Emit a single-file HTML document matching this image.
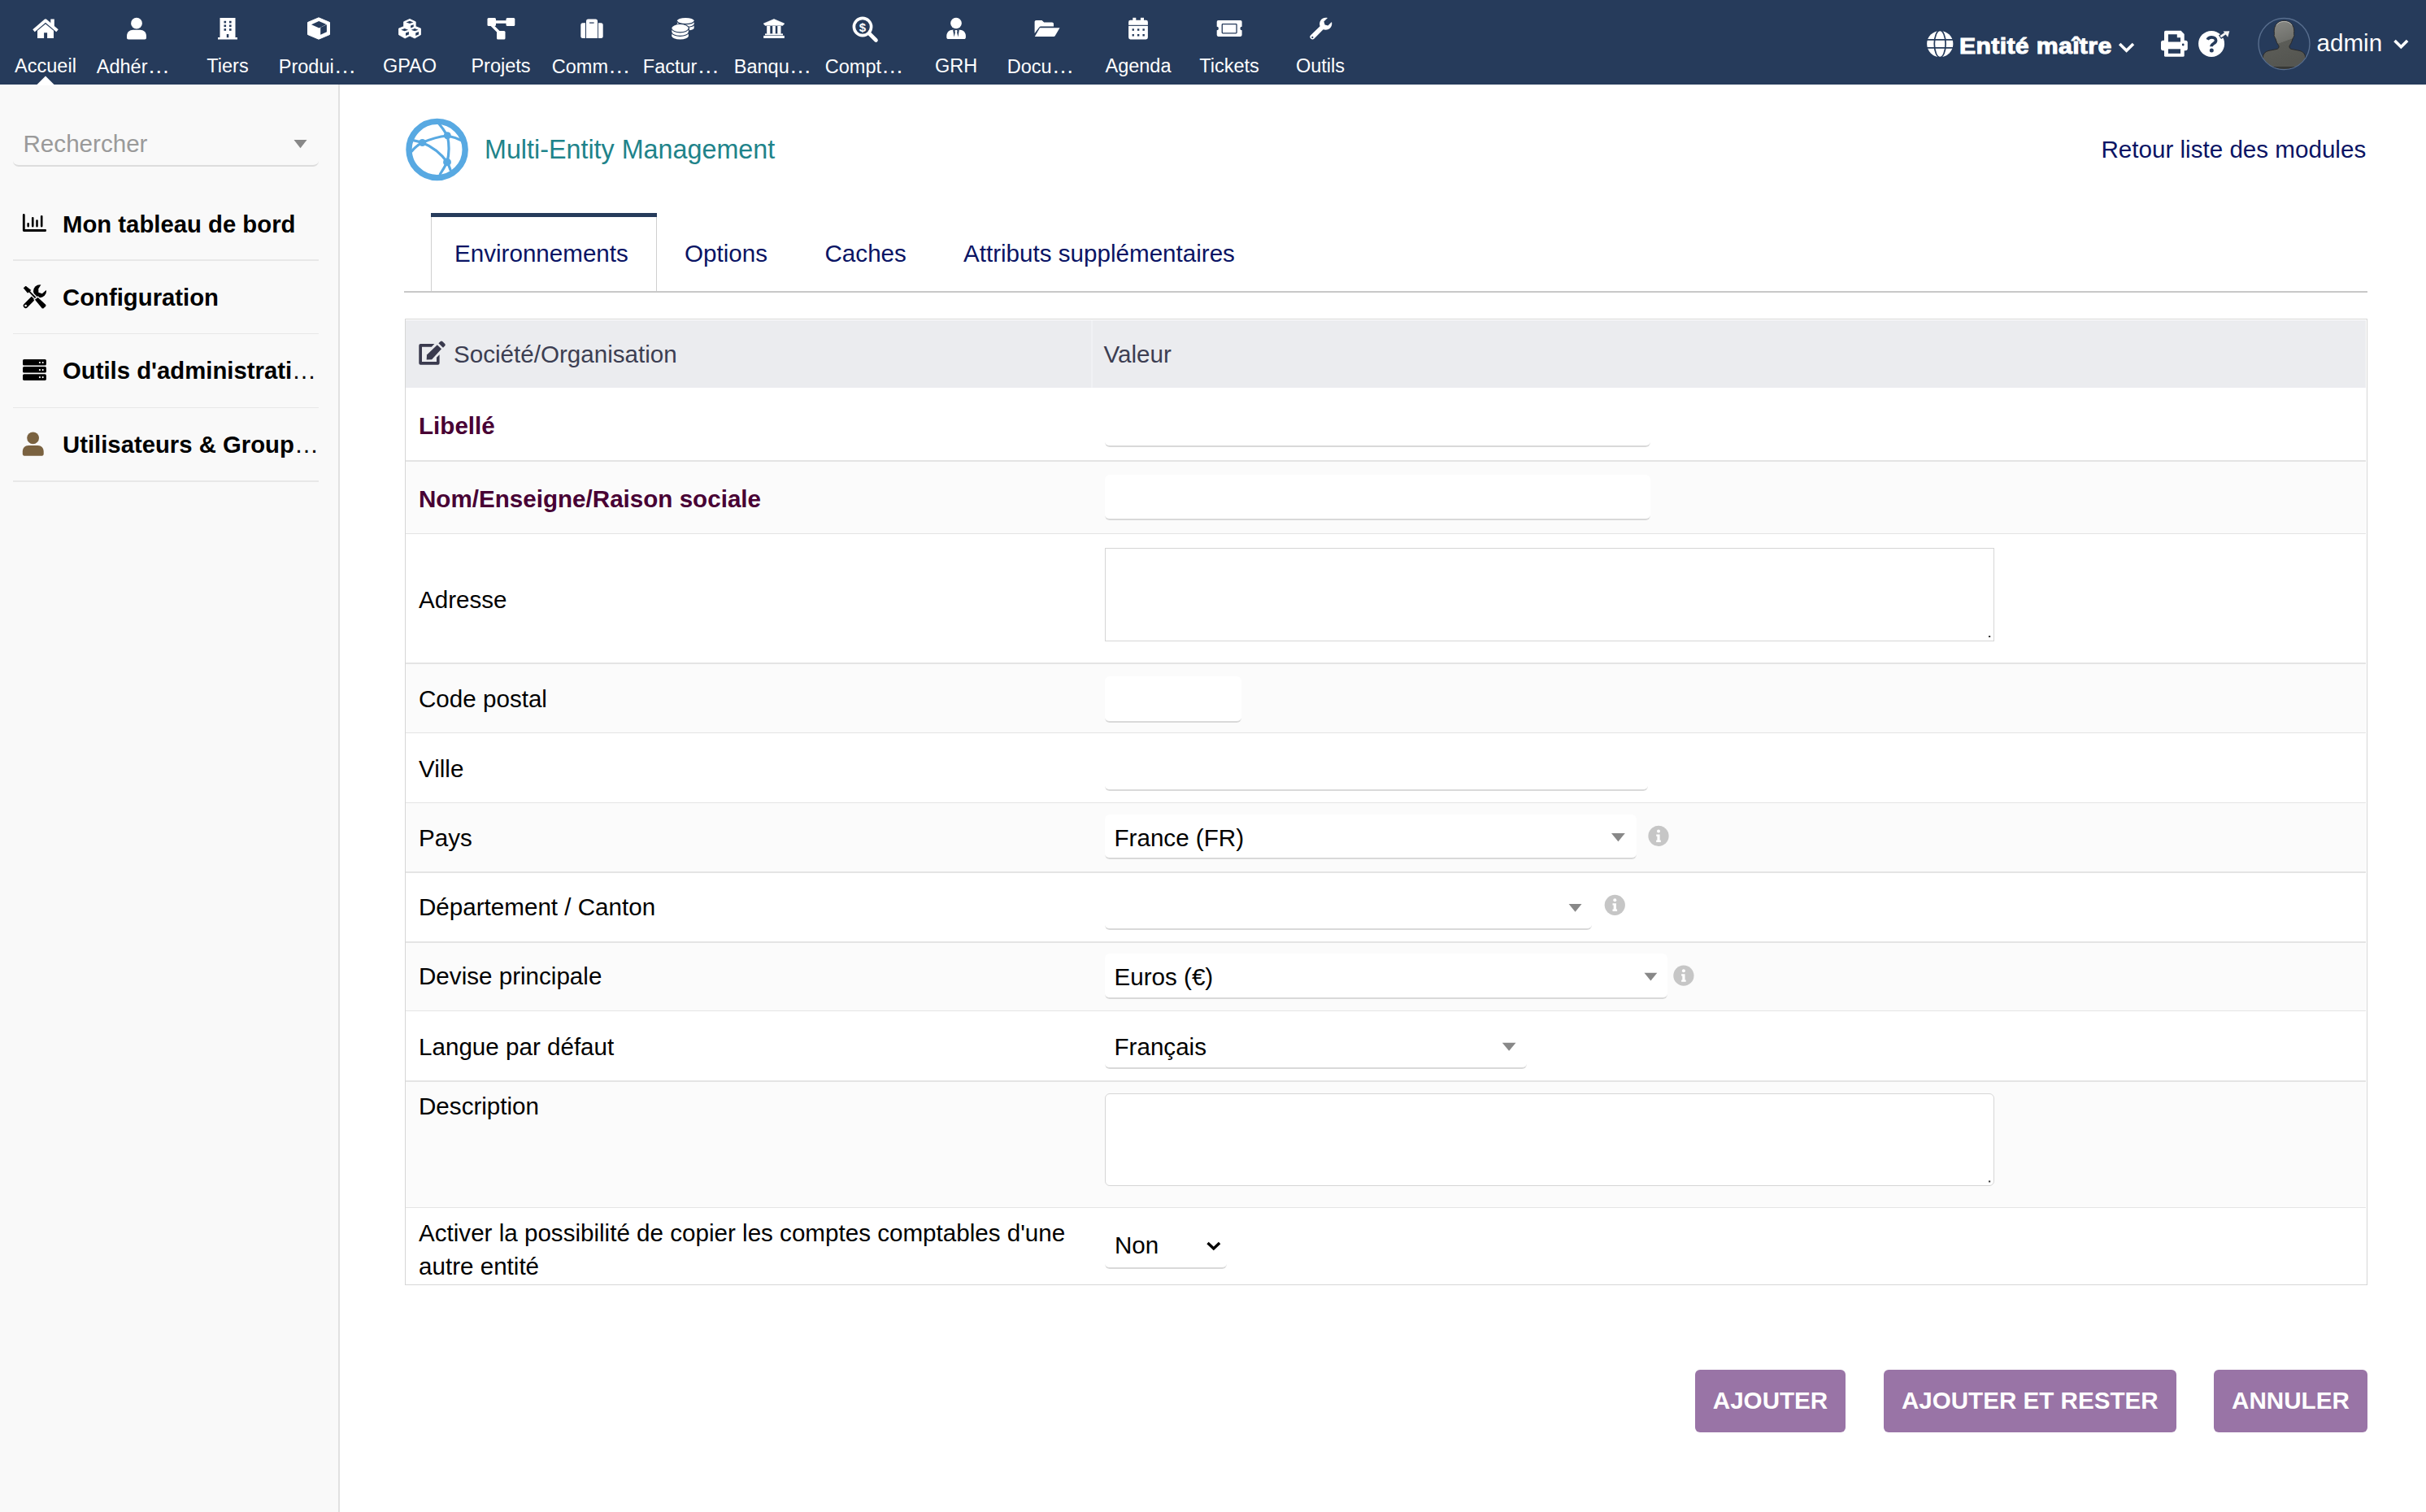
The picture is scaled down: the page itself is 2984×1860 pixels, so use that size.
<!DOCTYPE html>
<html><head><meta charset="utf-8"><title>Multi-Entity Management</title>
<style>
html,body{margin:0;padding:0;width:2984px;height:1860px;overflow:hidden;background:#fff;font-family:'Liberation Sans', sans-serif}
.t{position:absolute;line-height:0;white-space:nowrap;font-family:'Liberation Sans', sans-serif}
svg.ov{position:absolute;left:0;top:0;width:2984px;height:1860px;pointer-events:none}
</style></head><body>
<div style="position:absolute;left:0px;top:0px;width:2984px;height:104px;background:rgb(38,59,91)"></div><div class="t" style="left:0px;width:112px;text-align:center;top:81px;font-size:23.5px;color:#fff">Accueil</div><div class="t" style="left:118.8px;top:81px;font-size:23.5px;color:#fff">Adhér<span style="font-size:27.5px;letter-spacing:0">…</span></div><div class="t" style="left:224px;width:112px;text-align:center;top:81px;font-size:23.5px;color:#fff">Tiers</div><div class="t" style="left:342.8px;top:81px;font-size:23.5px;color:#fff">Produi<span style="font-size:27.5px;letter-spacing:0">…</span></div><div class="t" style="left:448px;width:112px;text-align:center;top:81px;font-size:23.5px;color:#fff">GPAO</div><div class="t" style="left:560px;width:112px;text-align:center;top:81px;font-size:23.5px;color:#fff">Projets</div><div class="t" style="left:678.8px;top:81px;font-size:23.5px;color:#fff">Comm<span style="font-size:27.5px;letter-spacing:0">…</span></div><div class="t" style="left:790.8px;top:81px;font-size:23.5px;color:#fff">Factur<span style="font-size:27.5px;letter-spacing:0">…</span></div><div class="t" style="left:902.8px;top:81px;font-size:23.5px;color:#fff">Banqu<span style="font-size:27.5px;letter-spacing:0">…</span></div><div class="t" style="left:1014.8px;top:81px;font-size:23.5px;color:#fff">Compt<span style="font-size:27.5px;letter-spacing:0">…</span></div><div class="t" style="left:1120px;width:112px;text-align:center;top:81px;font-size:23.5px;color:#fff">GRH</div><div class="t" style="left:1238.8px;top:81px;font-size:23.5px;color:#fff">Docu<span style="font-size:27.5px;letter-spacing:0">…</span></div><div class="t" style="left:1344px;width:112px;text-align:center;top:81px;font-size:23.5px;color:#fff">Agenda</div><div class="t" style="left:1456px;width:112px;text-align:center;top:81px;font-size:23.5px;color:#fff">Tickets</div><div class="t" style="left:1568px;width:112px;text-align:center;top:81px;font-size:23.5px;color:#fff">Outils</div><div class="t" style="left:2849.5px;top:52.50px;font-size:29.6px;color:#fff;font-weight:normal;">admin</div><div class="t" style="left:2410px;top:57px;font-size:27px;color:#fff;font-weight:bold;letter-spacing:0.3px;-webkit-text-stroke:1px #fff;transform:scaleX(1.12);transform-origin:0 0">Entité maître</div><div style="position:absolute;left:0px;top:104px;width:418px;height:1756px;background:#f9f9f9;border-right:2px solid #e1e1e1;box-sizing:border-box"></div><div style="position:absolute;left:0px;top:104px;width:416px;height:1px;background:#fff"></div><div style="position:absolute;left:16px;top:120px;width:376px;height:82.5px;border-bottom:2px solid #ddd;border-radius:0 0 7px 7px"></div><div class="t" style="left:28.5px;top:177.20px;font-size:29.6px;color:#9a9a9a;font-weight:normal;">Rechercher</div><div class="t" style="left:77px;top:275.80px;font-size:29.3px;color:#000;font-weight:bold;">Mon tableau de bord</div><div class="t" style="left:77px;top:366.10px;font-size:29.3px;color:#000;font-weight:bold;">Configuration</div><div class="t" style="left:77px;top:455.80px;font-size:29.3px;color:#000;font-weight:bold;">Outils d'administrati<span style='font-size:30px;font-weight:normal'>…</span></div><div class="t" style="left:77px;top:546.50px;font-size:29.3px;color:#000;font-weight:bold;">Utilisateurs &amp; Group<span style='font-size:30px;font-weight:normal'>…</span></div><div style="position:absolute;left:16px;top:319.25px;width:376px;height:1.5px;background:#e8e8e8"></div><div style="position:absolute;left:16px;top:409.75px;width:376px;height:1.5px;background:#e8e8e8"></div><div style="position:absolute;left:16px;top:500.75px;width:376px;height:1.5px;background:#e8e8e8"></div><div style="position:absolute;left:16px;top:591.25px;width:376px;height:1.5px;background:#e8e8e8"></div><div class="t" style="left:596px;top:184.00px;font-size:32.3px;color:rgb(32,131,138);font-weight:normal;">Multi-Entity Management</div><div class="t" style="left:2584.5px;top:184.30px;font-size:29.6px;color:rgb(10,20,100);font-weight:normal;">Retour liste des modules</div><div style="position:absolute;left:530px;top:262px;width:278px;height:98px;background:#fff;border-left:1.5px solid #d0d0d0;border-right:1.5px solid #d0d0d0;box-sizing:border-box"></div><div style="position:absolute;left:530px;top:262px;width:278px;height:5px;background:rgb(38,59,91)"></div><div style="position:absolute;left:497px;top:358.2px;width:2415px;height:1.8000000000000114px;background:#c8c8c8"></div><div class="t" style="left:559px;top:311.70px;font-size:29.6px;color:rgb(10,20,100);font-weight:normal;">Environnements</div><div class="t" style="left:842px;top:311.70px;font-size:29.6px;color:rgb(10,20,100);font-weight:normal;">Options</div><div class="t" style="left:1014.5px;top:311.70px;font-size:29.6px;color:rgb(10,20,100);font-weight:normal;">Caches</div><div class="t" style="left:1185px;top:311.70px;font-size:29.6px;color:rgb(10,20,100);font-weight:normal;">Attributs supplémentaires</div><div style="position:absolute;left:497.6px;top:392px;width:2414.4px;height:1189px;border:1.6px solid #d6d6d6;box-sizing:border-box;background:#fff"></div><div style="position:absolute;left:499.2px;top:393.6px;width:2411.2000000000003px;height:83.39999999999998px;background:rgb(235,236,239)"></div><div style="position:absolute;left:1342px;top:393.6px;width:1.5px;height:83.39999999999998px;background:rgb(240,241,244)"></div><div style="position:absolute;left:499.2px;top:477px;width:2411.2000000000003px;height:89.35000000000002px;background:#fff"></div><div style="position:absolute;left:499.2px;top:566.35px;width:2411.2000000000003px;height:1.2999999999999545px;background:#e4e4e4"></div><div style="position:absolute;left:499.2px;top:567.65px;width:2411.2000000000003px;height:88.20000000000005px;background:rgb(251,251,251)"></div><div style="position:absolute;left:499.2px;top:655.85px;width:2411.2000000000003px;height:1.2999999999999545px;background:#e4e4e4"></div><div style="position:absolute;left:499.2px;top:657.15px;width:2411.2000000000003px;height:158.20000000000005px;background:#fff"></div><div style="position:absolute;left:499.2px;top:815.35px;width:2411.2000000000003px;height:1.2999999999999545px;background:#e4e4e4"></div><div style="position:absolute;left:499.2px;top:816.65px;width:2411.2000000000003px;height:84.20000000000005px;background:rgb(251,251,251)"></div><div style="position:absolute;left:499.2px;top:900.85px;width:2411.2000000000003px;height:1.2999999999999545px;background:#e4e4e4"></div><div style="position:absolute;left:499.2px;top:902.15px;width:2411.2000000000003px;height:84.70000000000005px;background:#fff"></div><div style="position:absolute;left:499.2px;top:986.85px;width:2411.2000000000003px;height:1.2999999999999545px;background:#e4e4e4"></div><div style="position:absolute;left:499.2px;top:988.15px;width:2411.2000000000003px;height:84.19999999999993px;background:rgb(251,251,251)"></div><div style="position:absolute;left:499.2px;top:1072.35px;width:2411.2000000000003px;height:1.300000000000182px;background:#e4e4e4"></div><div style="position:absolute;left:499.2px;top:1073.65px;width:2411.2000000000003px;height:84.69999999999982px;background:#fff"></div><div style="position:absolute;left:499.2px;top:1158.35px;width:2411.2000000000003px;height:1.300000000000182px;background:#e4e4e4"></div><div style="position:absolute;left:499.2px;top:1159.65px;width:2411.2000000000003px;height:83.19999999999982px;background:rgb(251,251,251)"></div><div style="position:absolute;left:499.2px;top:1242.85px;width:2411.2000000000003px;height:1.300000000000182px;background:#e4e4e4"></div><div style="position:absolute;left:499.2px;top:1244.15px;width:2411.2000000000003px;height:85.19999999999982px;background:#fff"></div><div style="position:absolute;left:499.2px;top:1329.35px;width:2411.2000000000003px;height:1.300000000000182px;background:#e4e4e4"></div><div style="position:absolute;left:499.2px;top:1330.65px;width:2411.2000000000003px;height:154.19999999999982px;background:rgb(251,251,251)"></div><div style="position:absolute;left:499.2px;top:1484.85px;width:2411.2000000000003px;height:1.300000000000182px;background:#e4e4e4"></div><div style="position:absolute;left:499.2px;top:1486.15px;width:2411.2000000000003px;height:92.84999999999991px;background:#fff"></div><div class="t" style="left:558px;top:435.80px;font-size:29.6px;color:rgb(60,62,82);font-weight:normal;">Société/Organisation</div><div class="t" style="left:1357.5px;top:435.80px;font-size:29.6px;color:rgb(60,62,82);font-weight:normal;">Valeur</div><div class="t" style="left:515px;top:523.70px;font-size:29.6px;color:rgb(72,0,52);font-weight:bold;">Libellé</div><div class="t" style="left:515px;top:613.50px;font-size:29.6px;color:rgb(72,0,52);font-weight:bold;">Nom/Enseigne/Raison sociale</div><div class="t" style="left:515px;top:737.60px;font-size:29.6px;color:#000;font-weight:normal;">Adresse</div><div class="t" style="left:515px;top:859.70px;font-size:29.6px;color:#000;font-weight:normal;">Code postal</div><div class="t" style="left:515px;top:945.80px;font-size:29.6px;color:#000;font-weight:normal;">Ville</div><div class="t" style="left:515px;top:1030.50px;font-size:29.6px;color:#000;font-weight:normal;">Pays</div><div class="t" style="left:515px;top:1115.90px;font-size:29.6px;color:#000;font-weight:normal;">Département / Canton</div><div class="t" style="left:515px;top:1201.20px;font-size:29.6px;color:#000;font-weight:normal;">Devise principale</div><div class="t" style="left:515px;top:1288.10px;font-size:29.6px;color:#000;font-weight:normal;">Langue par défaut</div><div class="t" style="left:515px;top:1361.10px;font-size:29.6px;color:#000;font-weight:normal;">Description</div><div class="t" style="left:515px;top:1516.50px;font-size:29.6px;color:#000;font-weight:normal;">Activer la possibilité de copier les comptes comptables d'une</div><div class="t" style="left:515px;top:1557.80px;font-size:29.6px;color:#000;font-weight:normal;">autre entité</div><div style="position:absolute;left:1358.5px;top:494px;width:671.5px;height:55.5px;background:#fff;border-bottom:2px solid #d9d9d9;border-radius:6px;box-sizing:border-box"></div><div style="position:absolute;left:1358.5px;top:584px;width:671.5px;height:56px;background:#fff;border-bottom:2px solid #d9d9d9;border-radius:6px;box-sizing:border-box"></div><div style="position:absolute;left:1358.5px;top:674px;width:1094.5px;height:115px;background:#fff;border:1.6px solid #d6d6d6;box-sizing:border-box"></div><div style="position:absolute;left:1358.5px;top:832px;width:168.0px;height:56.5px;background:#fff;border-bottom:2px solid #d9d9d9;border-radius:6px;box-sizing:border-box"></div><div style="position:absolute;left:1358.5px;top:916px;width:668.5px;height:56.5px;background:#fff;border-bottom:2px solid #d9d9d9;border-radius:6px;box-sizing:border-box"></div><div style="position:absolute;left:1358.5px;top:1001.8px;width:654.0px;height:55.200000000000045px;background:#fff;border-bottom:2px solid #d9d9d9;border-radius:6px;box-sizing:border-box"></div><div style="position:absolute;left:1358.5px;top:1088px;width:599.5px;height:56px;background:#fff;border-bottom:2px solid #d9d9d9;border-radius:6px;box-sizing:border-box"></div><div style="position:absolute;left:1358.5px;top:1173px;width:692.5px;height:55.5px;background:#fff;border-bottom:2px solid #d9d9d9;border-radius:6px;box-sizing:border-box"></div><div style="position:absolute;left:1358.5px;top:1259px;width:519.5px;height:56px;background:#fff;border-bottom:2px solid #d9d9d9;border-radius:6px;box-sizing:border-box"></div><div style="position:absolute;left:1358.5px;top:1344.5px;width:1094.5px;height:114.0px;background:#fff;border:1.6px solid #d6d6d6;border-radius:6px;box-sizing:border-box"></div><div style="position:absolute;left:1359px;top:1504px;width:149.5px;height:56.5px;background:#fff;border-bottom:2px solid #d9d9d9;border-radius:6px;box-sizing:border-box"></div><div class="t" style="left:1370.5px;top:1030.70px;font-size:29.6px;color:#000;font-weight:normal;">France (FR)</div><div class="t" style="left:1370.5px;top:1201.50px;font-size:29.6px;color:#000;font-weight:normal;">Euros (€)</div><div class="t" style="left:1370.5px;top:1288.20px;font-size:29.6px;color:#000;font-weight:normal;">Français</div><div class="t" style="left:1371px;top:1531.50px;font-size:29.6px;color:#000;font-weight:normal;">Non</div><div style="position:absolute;left:2085px;top:1685px;width:185px;height:76.5px;background:rgb(153,116,166);border-radius:6px"></div><div class="t" style="left:2085px;width:185px;text-align:center;top:1722.8px;font-size:29.6px;color:#fff;font-weight:bold">AJOUTER</div><div style="position:absolute;left:2317px;top:1685px;width:359.5px;height:76.5px;background:rgb(153,116,166);border-radius:6px"></div><div class="t" style="left:2317px;width:359.5px;text-align:center;top:1722.8px;font-size:29.6px;color:#fff;font-weight:bold">AJOUTER ET RESTER</div><div style="position:absolute;left:2723.3px;top:1685px;width:188.29999999999973px;height:76.5px;background:rgb(153,116,166);border-radius:6px"></div><div class="t" style="left:2723.3px;width:188.29999999999973px;text-align:center;top:1722.8px;font-size:29.6px;color:#fff;font-weight:bold">ANNULER</div>
<svg class="ov" width="2984" height="1860" viewBox="0 0 2984 1860">
<path d="M45 104.5 L56 93.5 L67 104.5 Z" fill="#fff"/>
<g fill="#fff">
 <path d="M41.5 37.8 L56 25.3 L70.5 37.8" fill="none" stroke="#fff" stroke-width="3.8" stroke-linejoin="round"/>
 <rect x="62.3" y="23.5" width="4.5" height="9"/>
 <path d="M46 37.8 L56 29.6 L66 37.8 V47 H58.1 V40.2 H54.1 V47 H46 Z"/>
 <circle cx="168" cy="28.7" r="6.9"/>
 <path d="M156 46.6 V44.5 C156 39.6 159.4 36.8 163.7 36.8 H172.3 C176.6 36.8 180 39.6 180 44.5 V46.6 C180 47.8 179.2 48.6 178 48.6 H158 C156.8 48.6 156 47.8 156 46.6 Z"/>
 <path d="M270.5 22 H289.5 V46 H292 V48.6 H268 V46 H270.5 Z"/>
 <path d="M392 21.8 L405.5 27.5 V42.5 L392 48.2 L378.5 42.5 V27.5 Z" stroke="#fff" stroke-width="1" stroke-linejoin="round"/>
</g>
<g fill="rgb(38,59,91)">
 <rect x="275.5" y="25.8" width="2.6" height="2.6"/><rect x="282" y="25.8" width="2.6" height="2.6"/>
 <rect x="275.5" y="30.5" width="2.6" height="2.6"/><rect x="282" y="30.5" width="2.6" height="2.6"/>
 <rect x="275.5" y="35.2" width="2.6" height="2.6"/><rect x="282" y="35.2" width="2.6" height="2.6"/>
 <rect x="278.8" y="42" width="2.5" height="4.2"/>
 <path d="M383 30.3 L392.2 26 L401.4 30.1 L392.6 34.4 Z"/>
 <path d="M394.2 33.8 L401.9 30.2 V39.2 L394.2 42.8 Z"/>
</g>
<path d="M504 23.4 L511.2 26.8 V32.6 L517.5 35.1 V42.7 L510.1 47 L504 44.1 L498.1 47 L490.5 42.7 V35.1 L496.6 32.6 V26.8 Z" fill="#fff" stroke="#fff" stroke-width="0.8" stroke-linejoin="round"/>
<g fill="rgb(38,59,91)">
<path d="M499.5 27.4 L504 25.8 L508.5 27.4 L504 29 Z"/>
<path d="M493.3 36.7 L497.7 35.1 L502.1 36.7 L497.7 38.3 Z"/>
<path d="M505.7 36.7 L510.1 35.1 L514.5 36.7 L510.1 38.3 Z"/>
<path d="M505.1 31.6 L508.7 30.2 V33.1 L505.1 34.5 Z"/>
<path d="M499 40.5 L502.9 39.1 V42.5 L499 43.9 Z"/>
<path d="M511.2 40.5 L515 39.1 V42.5 L511.2 43.9 Z"/>
</g>
<g fill="#fff">
 <rect x="599.5" y="22" width="10.5" height="10" rx="1.5"/>
 <rect x="622.5" y="22" width="10.8" height="10" rx="1.5"/>
 <rect x="611" y="38" width="10.5" height="10.4" rx="1.5"/>
 <rect x="609" y="25.2" width="14" height="3.6"/>
 <path d="M604.5 30.5 L613.5 39.5" stroke="#fff" stroke-width="3.4"/>
 <path d="M720 28.3 V47 H716.8 Q714.3 47 714.3 44.5 V30.8 Q714.3 28.3 716.8 28.3 Z"/>
 <path d="M721 47 V25.9 Q721 23.4 723.5 23.4 H732.5 Q735 23.4 735 25.9 V47 Z"/>
 <path d="M735.9 28.3 H739.2 Q741.7 28.3 741.7 30.8 V44.5 Q741.7 47 739.2 47 H735.9 Z"/>
</g>
<rect x="724.8" y="27.2" width="6.1" height="1.7" rx="0.8" fill="rgb(98,113,138)"/>

<g fill="#fff">
 <path d="M832.9 25.45 V34.4 A10.4 3.5 0 0 0 853.7 34.4 V25.45 Z"/>
 <ellipse cx="843.3" cy="25.45" rx="10.4" ry="3.55"/>
</g>
<g fill="none" stroke="rgb(38,59,91)" stroke-width="1.1">
 <path d="M832.9 26.1 A10.4 3.55 0 0 0 853.7 26.1"/>
 <path d="M832.9 30.1 A10.4 3.5 0 0 0 853.7 30.1"/>
</g>
<g fill="rgb(38,59,91)">
 <ellipse cx="836.55" cy="34.6" rx="11.4" ry="5.6"/>
 <rect x="825.15" y="34.6" width="22.8" height="9.6"/>
 <ellipse cx="836.55" cy="44.2" rx="11.4" ry="5.6"/>
</g>
<g fill="#fff">
 <ellipse cx="836.55" cy="34.6" rx="10.2" ry="4.5"/>
 <rect x="826.35" y="34.6" width="20.4" height="9.6"/>
 <ellipse cx="836.55" cy="44.2" rx="10.2" ry="4.4"/>
</g>
<g fill="none" stroke="rgb(38,59,91)" stroke-width="1.15">
 <path d="M826.35 35.3 A10.2 4.5 0 0 0 846.75 35.3"/>
 <path d="M826.35 39.9 A10.2 4.5 0 0 0 846.75 39.9"/>
</g>

<g fill="#fff">
 <path d="M939.2 29 L952 23.6 L964.8 29 L963 31.3 H941 Z" stroke="#fff" stroke-width="0.6" stroke-linejoin="round"/>
 <rect x="943.2" y="32" width="4.1" height="9.8"/><rect x="950.2" y="32" width="3.6" height="9.8"/><rect x="956.3" y="32" width="4.2" height="9.8"/>
 <rect x="941" y="41.4" width="22" height="1.9"/>
 <rect x="939.2" y="43.9" width="25.6" height="3.1"/>
</g>
<circle cx="1061" cy="33" r="10.6" fill="none" stroke="#fff" stroke-width="3.6"/>
<path d="M1069 41 L1077.5 49.5" stroke="#fff" stroke-width="4.6" stroke-linecap="round"/>
<text x="1061" y="38.6" font-family="Liberation Sans" font-weight="bold" font-size="15" fill="#fff" text-anchor="middle">$</text>
<g fill="#fff">
 <circle cx="1176" cy="28.5" r="6.85"/>
 <path d="M1164.3 46 V44 C1164.3 40 1167.5 36.8 1171.5 36.8 H1180.7 C1184.7 36.8 1187.9 40 1187.9 44 V46 C1187.9 47.2 1187 48.1 1185.8 48.1 H1166.4 C1165.2 48.1 1164.3 47.2 1164.3 46 Z"/>
</g>
<g fill="rgb(38,59,91)">
 <path d="M1172.1 36.6 H1175 L1174.5 38.6 L1174.9 39.7 L1173.6 45.6 Z"/>
 <path d="M1179.9 36.6 H1177 L1177.5 38.6 L1177.1 39.7 L1178.4 45.6 Z"/>
 <rect x="1174.5" y="36" width="3" height="0.9"/>
</g>
<g fill="#fff">
 <path d="M1272.6 41 V27 C1272.6 25.8 1273.4 24.9 1274.6 24.9 H1281.5 L1284.2 27.6 H1294 C1295.2 27.6 1296 28.4 1296 29.6 V32.4 H1280.5 C1279.4 32.4 1278.4 33 1277.9 34 Z"/>
 <path d="M1279 34.3 H1303.5 L1297.8 44 C1297.4 44.6 1296.8 44.9 1296 44.9 H1272.8 Z"/>
 <rect x="1388.1" y="24.7" width="23.8" height="23.7" rx="2.3"/>
 <rect x="1393.3" y="21.8" width="4" height="5"/>
 <rect x="1402.9" y="21.8" width="4.1" height="5"/>
</g>
<g fill="rgb(38,59,91)">
 <rect x="1387" y="30.8" width="26" height="1.1"/>
 <rect x="1392.6" y="35.3" width="2.3" height="2.5"/><rect x="1398.95" y="35.3" width="2.4" height="2.5"/><rect x="1405.45" y="35.3" width="2.4" height="2.5"/>
 <rect x="1392.6" y="42" width="2.3" height="2.5"/><rect x="1398.95" y="42" width="2.4" height="2.5"/><rect x="1405.45" y="42" width="2.4" height="2.5"/>
</g>
<path d="M1498.5 24.9 H1525.8 Q1527.6 24.9 1527.6 26.7 V32.8 A2.2 2.2 0 0 0 1527.6 37.2 V43.1 Q1527.6 44.9 1525.8 44.9 H1498.5 Q1496.7 44.9 1496.7 43.1 V37.2 A2.2 2.2 0 0 0 1496.7 32.8 V26.7 Q1496.7 24.9 1498.5 24.9 Z" fill="#fff"/>
<rect x="1503.25" y="29.6" width="17.8" height="11.3" rx="0.8" fill="#fff" stroke="rgb(38,59,91)" stroke-width="1.3"/>
<g fill="#fff">
 <path d="M1612.5 47.8 C1611 46.6 1610.8 44.8 1612 43.5 L1623.6 32.3 C1622.4 28.6 1623.6 24.8 1626.8 22.8 C1628.8 21.6 1631 21.5 1633 22 L1628.4 26.6 L1629.6 30.5 L1633.4 31.6 L1638 27 C1638.6 29.6 1638.2 31.5 1636.9 33.4 C1634.8 36.4 1631 37.4 1627.6 36.3 L1616.5 47.6 C1615.3 48.8 1613.8 48.9 1612.5 47.8 Z"/>
</g>
<circle cx="1614.3" cy="45.9" r="1.1" fill="rgb(38,59,91)"/>

<circle cx="2386.25" cy="54" r="16.1" fill="#fff"/>
<g fill="none" stroke="rgb(38,59,91)" stroke-width="1.7">
 <ellipse cx="2386.2" cy="54" rx="6.9" ry="16.6"/>
 <path d="M2369 48.9 H2403 M2369 58.8 H2403"/>
</g>
<polyline points="2607.2,54 2615.6,62.2 2624,54" fill="none" stroke="#fff" stroke-width="3.6"/>
<g fill="#fff">
 <path d="M2662 39.6 Q2662 37.8 2663.8 37.8 H2682.6 L2686.7 42 V52 H2662 Z"/>
 <rect x="2658" y="49.8" width="32.8" height="12.4" rx="2.6"/>
 <path d="M2662 58 H2686.7 V68.3 Q2686.7 69.8 2685.2 69.8 H2663.5 Q2662 69.8 2662 68.3 Z"/>
</g>
<g fill="rgb(38,59,91)">
 <path d="M2666.9 42.2 H2677.8 V46.3 H2682 V51.6 H2666.9 Z"/>
 <rect x="2666.9" y="60.3" width="15.1" height="5.5"/>
 <circle cx="2685.2" cy="55" r="1.4"/>
</g>
<circle cx="2720.1" cy="53.9" r="16" fill="#fff"/>
<path d="M2715.2 48.8 C2716.2 46.6 2718 45.9 2720.4 45.9 C2723.6 45.9 2725.6 47.6 2725.6 50 C2725.6 53.6 2720 53.4 2720 57.3" fill="none" stroke="rgb(38,59,91)" stroke-width="3.7"/>
<circle cx="2720.3" cy="62" r="2.5" fill="rgb(38,59,91)"/>
<path d="M2730.5 45.8 L2739.5 39.6" stroke="rgb(38,59,91)" stroke-width="5.5"/>
<path d="M2731.3 45.2 L2738.6 40.2" stroke="#f3f3f3" stroke-width="2.8"/>
<path d="M2734.6 38.5 L2742.3 38.2 L2740.2 45.8 Z" fill="#f3f3f3"/>
<polyline points="2945.5,50 2953.3,57.8 2961.1,50" fill="none" stroke="#fff" stroke-width="3.6"/>

<defs>
<linearGradient id="hg" x1="0" y1="0" x2="0.35" y2="1">
<stop offset="0" stop-color="#8e8e8a"/><stop offset="0.55" stop-color="#6f706b"/><stop offset="0.56" stop-color="#5b5c57"/><stop offset="1" stop-color="#555651"/>
</linearGradient>
<clipPath id="avc"><circle cx="2809.5" cy="54" r="31"/></clipPath>
</defs>
<circle cx="2809.5" cy="54" r="31.5" fill="none" stroke="rgb(88,110,142)" stroke-width="1.4"/>
<g clip-path="url(#avc)">
<path d="M2809.5 25.5 C2801.5 25.5 2797 31.5 2797.2 38.5 C2797.3 41 2797.8 42.5 2797 43.5 C2797.5 45.5 2799 47 2799.7 50 C2800.5 53.5 2802.5 55.2 2803 56.5 C2803.2 58.8 2802.5 60 2800 60.5 L2790 62.5 C2786 63.5 2784 66.5 2783.5 69 L2782 82.5 H2837 L2835.5 69 C2835 66.5 2833 63.5 2829 62.5 L2819 60.5 C2816.5 60 2815.8 58.8 2816 56.5 C2816.5 55.2 2818.5 53.5 2819.3 50 C2820 47 2821.5 45.5 2822 43.5 C2821.2 42.5 2821.7 41 2821.8 38.5 C2822 31.5 2817.5 25.5 2809.5 25.5 Z" fill="url(#hg)" stroke="#2a2a2a" stroke-width="1"/>
<path d="M2800 31 C2802 27.5 2806 26.5 2809.5 26.5 C2813 26.5 2817 27.5 2819 31" fill="none" stroke="#c9c9c5" stroke-width="1" opacity="0.8"/>
<rect x="2780" y="82.5" width="60" height="4" fill="#3a3b38"/>
</g>
<path d="M361.5 172 H377.5 L369.5 182.3 Z" fill="#888"/>
<g fill="#000">
 <path d="M29.2 263.1 Q30.7 263.1 30.7 264.5 V282.1 H56 Q57 282.1 57 283.5 Q57 284.9 56 284.9 H29.3 Q27.9 284.9 27.9 283.5 V264.5 Q27.9 263.1 29.2 263.1 Z"/>
 <rect x="33.4" y="273.9" width="2.5" height="5.5" rx="1.1"/>
 <rect x="38.95" y="266.9" width="2.6" height="12.5" rx="1.1"/>
 <rect x="44.25" y="270.3" width="2.5" height="9.1" rx="1.1"/>
 <rect x="49.9" y="265" width="2.6" height="14.4" rx="1.1"/>
</g>
<g>
 <path d="M31.6 376.1 L45.5 362" stroke="#000" stroke-width="5.8" stroke-linecap="round"/>
 <circle cx="49" cy="358.2" r="8"/>
 <path d="M51.2 349 L47.3 355.2 L47.3 359.8 L51.8 361.3 L59 355 L59 349 Z" fill="#f9f9f9"/>
 <circle cx="31.6" cy="376" r="1.35" fill="#f9f9f9"/>
 <g stroke="#f9f9f9" stroke-width="1.3" stroke-linejoin="round" fill="#000">
  <path d="M28 354.3 L31.5 350.8 L39.1 356.8 L37.9 358.2 L45.5 365.7 L43.1 368.1 L35.5 360.3 L34 361.6 Z"/>
  <path d="M42.1 368.6 L46.6 365.1 L56.6 374.2 C57.4 375.2 57.4 376.4 56.5 377.4 L54.2 379.4 C53.2 380.2 51.9 380.2 51 379.4 Z"/>
 </g>
</g>
<g fill="#000">
 <rect x="28" y="442" width="28.9" height="7.6" rx="1.6"/>
 <rect x="28" y="451" width="28.9" height="7.6" rx="1.6"/>
 <rect x="28" y="460.3" width="28.9" height="7.6" rx="1.6"/>
</g>
<g fill="#fff">
 <circle cx="48.9" cy="446" r="1.1"/><circle cx="52.65" cy="446" r="1.1"/>
 <circle cx="48.9" cy="455.1" r="1.1"/><circle cx="52.65" cy="455.1" r="1.1"/>
 <circle cx="48.9" cy="464.1" r="1.1"/><circle cx="52.65" cy="464.1" r="1.1"/>
</g>
<g fill="rgb(122,98,64)">
 <circle cx="40.6" cy="538.8" r="7.4"/>
 <path d="M27.8 558.6 V555.5 C27.8 551 30.8 548 35 548 H46.5 C50.7 548 53.7 551 53.7 555.5 V558.6 C53.7 559.8 52.9 560.7 51.7 560.7 H29.8 C28.6 560.7 27.8 559.8 27.8 558.6 Z"/>
</g>

<g fill="none" stroke="rgb(88,169,226)" stroke-linecap="round">
 <circle cx="537.6" cy="184" r="34.6" stroke-width="7.4"/>
 <g stroke-width="3.2">
 <path d="M507 172.5 Q513 173.5 519.5 175.5"/>
 <path d="M506.5 186 Q512 179 519.5 175.5"/>
 <path d="M519.5 175.5 Q535 168.5 550.3 167"/>
 <path d="M550.3 167 Q558 168.5 567 172.5"/>
 <path d="M550.3 167 Q545 158 539 151"/>
 <path d="M550.3 167 Q554 183 550 199.4"/>
 <path d="M519.5 175.5 Q538 183 550 199.4"/>
 <path d="M550 199.4 Q546 207 541.5 214"/>
 <path d="M550 199.4 Q552.5 204 554 209"/>
 </g>
</g>
<g fill="rgb(88,169,226)">
 <circle cx="519.5" cy="175.5" r="4.6"/>
 <circle cx="550.3" cy="166.8" r="4.5"/>
 <circle cx="550" cy="199.4" r="4.9"/>
</g>

<g fill="rgb(58,58,78)">
 <path d="M517.3 423.1 H534.4 L530.8 426.7 H519 V445.1 H537 V439.8 L540.6 436.2 V446.7 Q540.6 448.7 538.6 448.7 H517.3 Q515.3 448.7 515.3 446.7 V425.1 Q515.3 423.1 517.3 423.1 Z"/>
 <path d="M525 436.4 L537.8 424.2 L543 429.2 L531.1 442.3 L524.7 442.6 Z"/>
 <path d="M539.4 422.3 L541.8 420 Q543 419 544.2 420 L547.3 423 Q548.3 424.2 547.3 425.3 L545 427.8 Z"/>
</g>

<g fill="#888">
 <path d="M1982 1025 H1998.8 L1990.4 1035.2 Z"/>
 <path d="M1929.6 1111.9 H1945.5 L1937.55 1121.8 Z"/>
 <path d="M2022.5 1196.7 H2038.3 L2030.4 1206.5 Z"/>
 <path d="M1847.8 1282.7 H1864.5 L1856.15 1292.7 Z"/>
</g>
<polyline points="1485.5,1529 1492.8,1536 1500.1,1529" fill="none" stroke="#000" stroke-width="3.4"/>
<g stroke="#666" stroke-width="0.9" fill="none"><path d="M2447 782 L2450 785 M2444 783 L2449 788" opacity="0.0"/></g>
<rect x="2446" y="782" width="2.2" height="2" fill="#3a3a3a"/>
<rect x="2446" y="1452.4" width="2.2" height="2" fill="#3a3a3a"/>
<circle cx="2040" cy="1028.4" r="12.6" fill="#c6c6c6"/>
<circle cx="2040" cy="1022.4000000000001" r="2" fill="#fff"/>
<path d="M2037.2 1026.4 H2041.6 V1033.6000000000001 H2042.8 V1036.0 H2037.2 V1033.6000000000001 H2038.4 V1028.7 H2037.2 Z" fill="#fff"/><circle cx="1986.3" cy="1113.3" r="12.6" fill="#c6c6c6"/>
<circle cx="1986.3" cy="1107.3" r="2" fill="#fff"/>
<path d="M1983.5 1111.3 H1987.8999999999999 V1118.5 H1989.1 V1120.8999999999999 H1983.5 V1118.5 H1984.7 V1113.6 H1983.5 Z" fill="#fff"/><circle cx="2070.9" cy="1200.2" r="12.6" fill="#c6c6c6"/>
<circle cx="2070.9" cy="1194.2" r="2" fill="#fff"/>
<path d="M2068.1 1198.2 H2072.5 V1205.4 H2073.7000000000003 V1207.8 H2068.1 V1205.4 H2069.3 V1200.5 H2068.1 Z" fill="#fff"/>
</svg>
</body></html>
